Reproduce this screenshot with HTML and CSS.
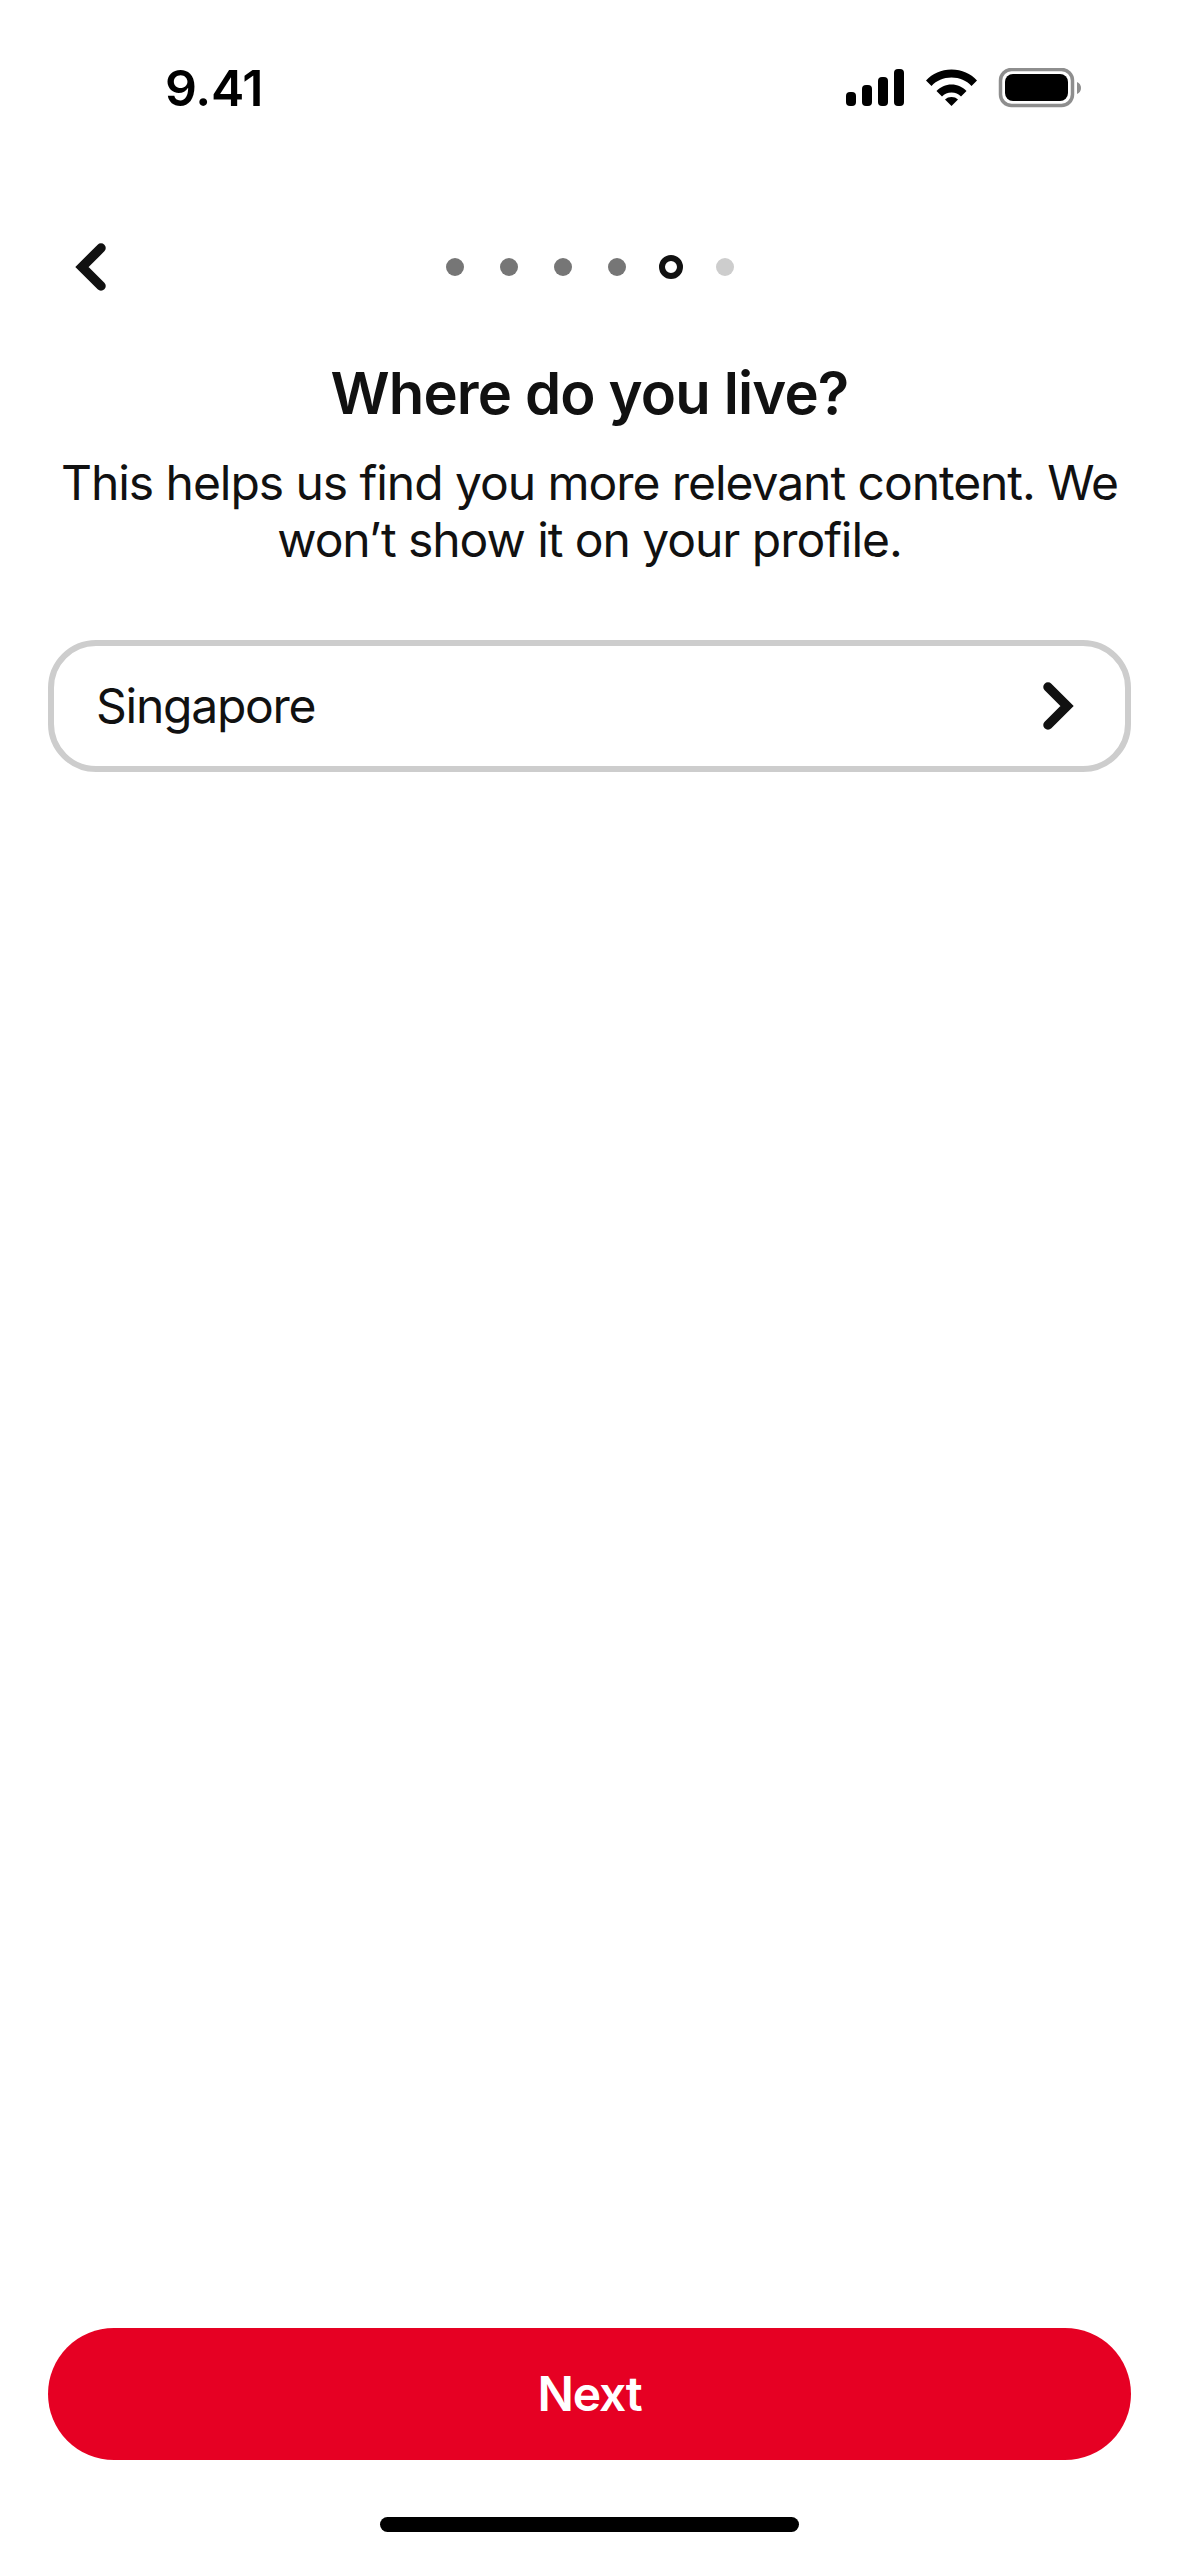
FILE: index.html
```html
<!DOCTYPE html>
<html lang="en">
<head>
<meta charset="utf-8">
<title>Where do you live?</title>
<link rel="stylesheet" href="styles.css">
</head>
<body>
<main class="screen">
  <header class="status">
    <span class="time">9.41</span>
    <svg class="status-icons" width="236" height="40" viewBox="846 68 236 40">
      <rect x="846" y="92" width="10" height="14" rx="4"/>
      <rect x="862" y="85" width="10" height="21" rx="4"/>
      <rect x="878" y="77" width="10" height="29" rx="4"/>
      <rect x="894" y="69" width="10" height="37" rx="4"/>
      <path d="M926 80.500C932.500 73.500 941 69.500 951.500 69.500C962 69.500 970.500 73.500 977 80.500L971.500 86C966.500 80.500 959.500 77.500 951.500 77.500C943.500 77.500 936.500 80.500 931.500 86Z"/>
      <path d="M936.500 91C940.500 87 945.500 84.500 951.500 84.500C957.500 84.500 962.500 87 966.500 91L961 96.500C958.500 94 955.300 92.500 951.500 92.500C947.700 92.500 944.500 94 942 96.500Z"/>
      <path d="M945 99.500C946.800 97.800 949 97 951.500 97C954 97 956.200 97.800 958 99.500L951.500 106Z"/>
      <rect class="batt-case" x="1000.500" y="69.500" width="72" height="36" rx="11"/>
      <rect x="1005" y="74" width="63" height="27" rx="8"/>
      <path class="batt-cap" d="M1077 82C1079.500 83 1081 85 1081 88C1081 91 1079.500 93 1077 94Z"/>
    </svg>
  </header>

  <nav class="topbar">
    <button class="back" aria-label="Back">
      <svg width="36" height="56" viewBox="0 0 36 56"><path d="M26 9L7 28L26 47"/></svg>
    </button>
    <div class="steps">
      <span class="dot done"></span>
      <span class="dot done"></span>
      <span class="dot done"></span>
      <span class="dot done"></span>
      <span class="dot current"></span>
      <span class="dot todo"></span>
    </div>
  </nav>

  <section class="intro">
    <h1 class="title">Where do you live?</h1>
    <p class="subtitle">This helps us find you more relevant content. We won’t show it on your profile.</p>
  </section>

  <div class="field">
    <span class="field-value">Singapore</span>
    <svg class="field-chevron" width="34" height="52" viewBox="0 0 34 52"><path d="M8 7L27 26L8 45"/></svg>
  </div>

  <div class="spacer"></div>

  <button class="next"><span class="next-label">Next</span></button>
  <div class="home-bar"></div>
</main>
</body>
</html>
```

FILE: styles.css
```css
* { box-sizing: border-box; }
html, body { margin: 0; padding: 0; background: #fff; }
.screen {
  width: 1179px;
  height: 2556px;
  display: flex;
  flex-direction: column;
  padding: 0 48px 24px;
  font-family: Inter, "Liberation Sans", sans-serif;
  color: #111;
  background: #fff;
  overflow: hidden;
}
.status {
  height: 65px;
  margin-top: 63px;
  display: flex;
  justify-content: space-between;
  align-items: flex-start;
  padding: 0 49px 0 117px;
  flex: none;
}
.time {
  font-size: 50px;
  line-height: 50px;
  font-weight: 600;
  letter-spacing: -0.3px;
  color: #000;
}
.status-icons { margin-top: 5px; fill: #000; }
.batt-case { fill: none; stroke: #8e8e8e; stroke-width: 3.500; }
.batt-cap { fill: #8e8e8e; }
.topbar {
  position: relative;
  height: 56px;
  margin-top: 101px;
  flex: none;
  display: flex;
  justify-content: center;
  align-items: center;
}
.back {
  position: absolute;
  left: 27px;
  top: 10px;
  width: 36px;
  height: 56px;
  padding: 0;
  border: 0;
  background: none;
}
.back svg, .field-chevron { display: block; }
.back path, .field-chevron path {
  fill: none;
  stroke: #111;
  stroke-width: 9.500;
  stroke-linecap: round;
  stroke-linejoin: miter;
}
.steps {
  display: flex;
  align-items: center;
  gap: 36px;
  margin-top: 20px;
}
.dot { width: 18px; height: 18px; border-radius: 50%; display: block; }
.dot.done { background: #767676; }
.dot.todo { background: #cdcdcd; }
.dot.current {
  width: 24px;
  height: 24px;
  margin: 0 -3px;
  border: 6px solid #111;
  background: #fff;
}
.intro { text-align: center; flex: none; }
.title {
  margin: 0;
  padding-top: 73px;
  font-size: 58px;
  line-height: 70px;
  font-weight: 600;
  letter-spacing: -0.85px;
}
.subtitle {
  margin: 26px 0 0;
  font-size: 48px;
  line-height: 57px;
  font-weight: 400;
  letter-spacing: -1.05px;
}
.field {
  margin-top: 72px;
  height: 132px;
  flex: none;
  border: 6px solid #cdcdcd;
  border-radius: 48px;
  display: flex;
  justify-content: space-between;
  align-items: center;
  padding: 0 51px 0 42px;
  background: #fff;
}
.field-value { font-size: 48px; line-height: 57px; letter-spacing: -1.25px; margin-top: -2px; }
.spacer { flex: 1; }
.next {
  height: 132px;
  flex: none;
  border: 0;
  border-radius: 66px;
  background: #e60023;
  color: #fff;
  font-family: inherit;
  font-size: 48px;
  font-weight: 600;
  letter-spacing: -1.2px;
  padding: 0 0 2px;
}
.home-bar {
  width: 419px;
  height: 15px;
  flex: none;
  margin: 57px auto 0;
  border-radius: 8px;
  background: #000;
}
```
